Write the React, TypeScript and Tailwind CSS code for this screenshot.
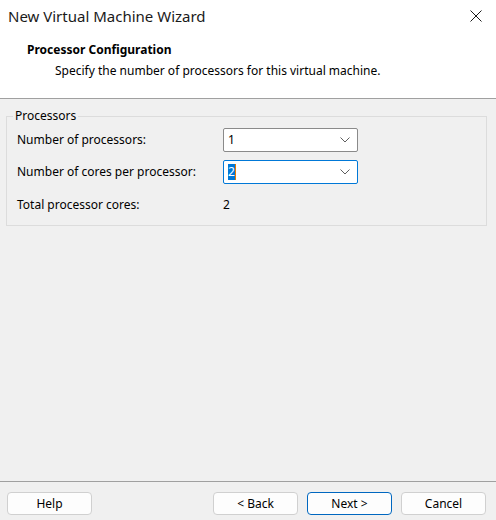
import React from "react";

const font = { fontFamily: '"Noto Sans", "Open Sans", sans-serif' };

function Chevron() {
  return (
    <svg width="10" height="6" viewBox="0 0 10 6" className="text-[#5f5f5f]">
      <path d="M0.5 0.5 L5 5 L9.5 0.5" fill="none" stroke="currentColor" strokeWidth="1" />
    </svg>
  );
}

function Select({ focused, value }: { focused?: boolean; value: string }) {
  return (
    <div
      className={
        "w-[135px] h-[24px] bg-white rounded-[2px] border flex items-center pl-[4px] pr-[7px] " +
        (focused ? "border-[#0078d7]" : "border-[#8a8a8a]")
      }
    >
      <div className="flex-1 flex items-center">
        {focused ? (
          <>
            <span className="bg-[#0078d7] text-white leading-[16px]">{value}</span>
            <span className="w-[1px] h-[16px] bg-[#e87a00]" />
          </>
        ) : (
          <span className="leading-[16px]">{value}</span>
        )}
      </div>
      <Chevron />
    </div>
  );
}

function Btn({ label, primary }: { label: string; primary?: boolean }) {
  return (
    <button
      className={
        "w-[85px] h-[23px] rounded-[4px] border bg-[#fdfdfd] text-[12px] leading-[16px] text-black " +
        (primary ? "border-[#0067c0]" : "border-[#d0d0d0]")
      }
    >
      {label}
    </button>
  );
}

export default function App() {
  return (
    <div
      className="w-[496px] h-[520px] bg-[#f0f0f0] flex flex-col text-[12px] text-black overflow-hidden"
      style={font}
    >
      {/* Title bar */}
      <div className="h-[32px] bg-white flex items-center pl-[8px] pr-[14px] shrink-0">
        <div className="flex-1 text-[15px] leading-[20px] text-[#1a1a1a]">New Virtual Machine Wizard</div>
        <svg width="12" height="12" viewBox="0 0 12 12">
          <path d="M0.5 0.5 L11.5 11.5 M11.5 0.5 L0.5 11.5" stroke="#1a1a1a" strokeWidth="1" fill="none" />
        </svg>
      </div>
      {/* Header */}
      <div className="h-[66px] bg-white pl-[27px] pt-[10px] shrink-0">
        <div className="font-bold leading-[16px]">Processor Configuration</div>
        <div className="ml-[28px] mt-[5px] leading-[16px]">
          Specify the number of processors for this virtual machine.
        </div>
      </div>
      <div className="h-[1px] bg-[#a0a0a0] shrink-0" />
      {/* Body */}
      <div className="flex-1 pt-[9px]">
        <fieldset className="ml-[6px] w-[481px] border border-[#dcdcdc] p-0">
          <legend className="ml-[6px] px-[2px] leading-[16px]">Processors</legend>
          <div className="pl-[10px] pt-[4px] pb-[8px]">
            <div className="flex items-center h-[24px]">
              <div className="w-[206px] leading-[16px]">Number of processors:</div>
              <Select value="1" />
            </div>
            <div className="flex items-center h-[24px] mt-[8px]">
              <div className="w-[206px] leading-[16px]">Number of cores per processor:</div>
              <Select value="2" focused />
            </div>
            <div className="flex items-center h-[24px] mt-[9px]">
              <div className="w-[206px] leading-[16px]">Total processor cores:</div>
              <div className="leading-[16px]">2</div>
            </div>
          </div>
        </fieldset>
      </div>
      <div className="h-[1px] bg-[#a0a0a0] shrink-0" />
      {/* Footer */}
      <div className="h-[38px] pt-[10px] pl-[7px] pr-[10px] flex items-start gap-[9px] shrink-0">
        <Btn label="Help" />
        <div className="flex-1" />
        <Btn label="< Back" />
        <Btn label="Next >" primary />
        <Btn label="Cancel" />
      </div>
    </div>
  );
}
